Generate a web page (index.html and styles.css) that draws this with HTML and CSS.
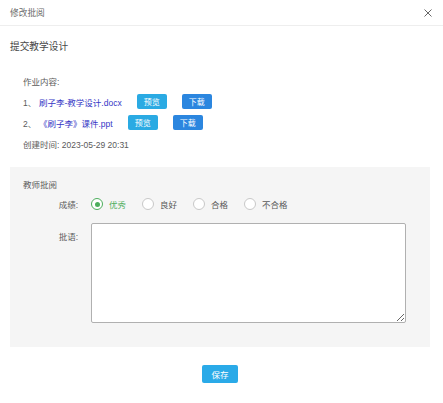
FILE: index.html
```html
<!DOCTYPE html>
<html lang="zh">
<head>
<meta charset="utf-8">
<link rel="stylesheet" href="styles.css">
</head>
<body>
<div class="dialog">
  <div class="header">
    <span class="header-title">修改批阅</span>
    <svg class="close" width="8" height="8" viewBox="0 0 8 8"><path d="M0.5 0.5L7.5 7.5M7.5 0.5L0.5 7.5" stroke="#666" stroke-width="1" fill="none"/></svg>
  </div>
  <div class="content">
    <div class="title">提交教学设计</div>
    <div class="work">
      <div class="line label-line">作业内容:</div>
      <div class="line file-row">
        <span class="num">1、</span>
        <a class="file-link">刷子李-教学设计.docx</a>
        <span class="btn btn-preview">预览</span>
        <span class="btn btn-download">下载</span>
      </div>
      <div class="line file-row">
        <span class="num">2、</span>
        <a class="file-link">《刷子李》课件.ppt</a>
        <span class="btn btn-preview">预览</span>
        <span class="btn btn-download">下载</span>
      </div>
      <div class="line created">创建时间:&nbsp;2023-05-29 20:31</div>
    </div>
    <div class="panel">
      <div class="panel-title">教师批阅</div>
      <div class="form-row score-row">
        <span class="form-label">成绩:</span>
        <div class="radios">
          <span class="radio checked"><i class="dot"></i><span>优秀</span></span>
          <span class="radio"><i class="dot"></i><span>良好</span></span>
          <span class="radio"><i class="dot"></i><span>合格</span></span>
          <span class="radio"><i class="dot"></i><span>不合格</span></span>
        </div>
      </div>
      <div class="form-row comment-row">
        <span class="form-label comment-label">批语:</span>
        <textarea class="comment"></textarea>
      </div>
    </div>
    <div class="footer">
      <span class="btn btn-save">保存</span>
    </div>
  </div>
</div>
</body>
</html>
```

FILE: styles.css
```css
html, body {
  margin: 0;
  padding: 0;
  background: #fff;
}
body {
  font-family: "Liberation Sans", "Noto Sans CJK SC", sans-serif;
  font-size: 8.5px;
  color: #5a5a5a;
  width: 443px;
  height: 403px;
  overflow: hidden;
}
.dialog {
  width: 443px;
}
.header {
  height: 25px;
  border-bottom: 1px solid #eee;
  display: flex;
  align-items: center;
  justify-content: space-between;
  padding: 0 11px 0 10px;
}
.header-title {
  font-size: 8.7px;
  color: #6a6a6a;
}
.close {
  display: block;
}
.content {
  padding: 0 13px 0 10px;
}
.title {
  margin-top: 14px;
  line-height: 14px;
  font-size: 9.7px;
  color: #484848;
}
.work {
  margin-top: 17px;
  padding-left: 13px;
}
.line {
  display: flex;
  align-items: center;
}
.label-line {
  height: 20px;
}
.file-row {
  height: 21px;
}
.created {
  height: 22px;
}
.num {
  width: 16px;
}
.file-link {
  color: #3638c6;
  margin-right: 15px;
}
.btn {
  display: inline-flex;
  align-items: center;
  justify-content: center;
  width: 30px;
  height: 15px;
  border-radius: 2px;
  color: #fff;
  font-size: 8px;
}
.btn-preview {
  background: #2aaae3;
  margin-right: 15px;
}
.btn-download {
  background: #2b86df;
}
.panel {
  margin-top: 12px;
  background: #f5f5f5;
  padding: 11px 0 24px 13px;
}
.panel-title {
  line-height: 14px;
}
.form-row {
  display: flex;
}
.score-row {
  margin-top: 2px;
  height: 20px;
  align-items: center;
}
.form-label {
  width: 55px;
  text-align: right;
  margin-right: 13px;
}
.radios {
  display: flex;
  align-items: center;
}
.radio {
  display: inline-flex;
  align-items: center;
  margin-right: 16px;
}
.radio .dot {
  width: 10px;
  height: 10px;
  border: 1px solid #c8c8c8;
  border-radius: 50%;
  background: #fff;
  margin-right: 6px;
  box-sizing: content-box;
  position: relative;
}
.radio.checked {
  color: #4cae5c;
}
.radio.checked .dot {
  border-color: #4cae5c;
}
.radio.checked .dot::after {
  content: "";
  position: absolute;
  left: 2.5px;
  top: 2.5px;
  width: 5px;
  height: 5px;
  border-radius: 50%;
  background: #4cae5c;
}
.comment-row {
  margin-top: 9px;
}
.comment-label {
  line-height: 14px;
  margin-top: 7px;
}
.comment {
  width: 315px;
  height: 100px;
  box-sizing: border-box;
  border: 1px solid #b0b0b0;
  border-radius: 2px;
  background: #fff;
  margin: 0;
  padding: 0;
  resize: both;
}
.footer {
  display: flex;
  justify-content: center;
  margin-top: 18px;
}
.btn-save {
  width: 36px;
  height: 18px;
  background: #2aaae8;
  font-size: 8.5px;
}
```
